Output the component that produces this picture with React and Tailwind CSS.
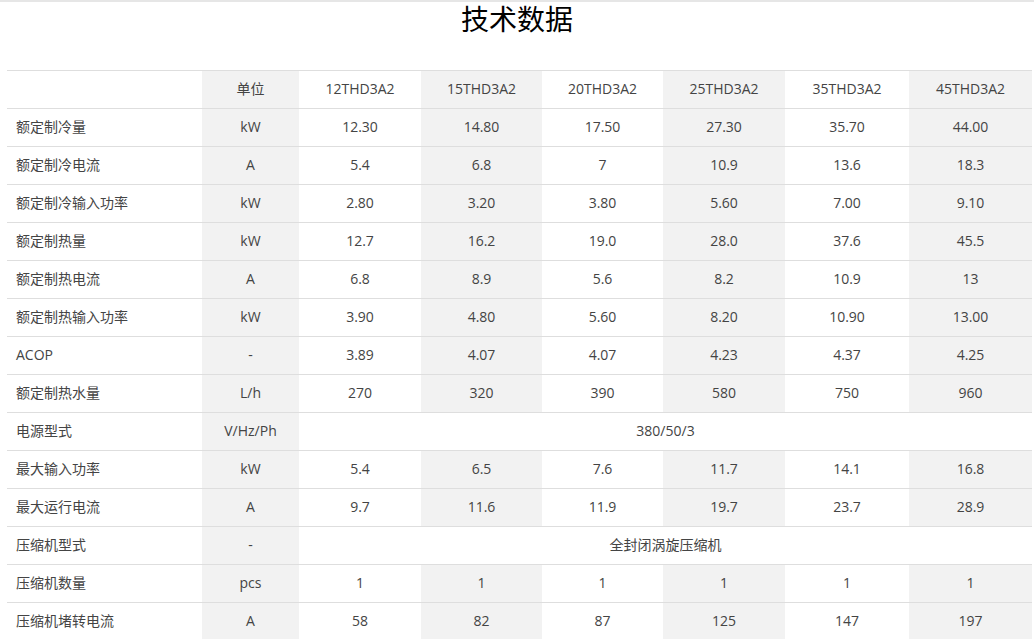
import React from 'react';

const models = ['12THD3A2', '15THD3A2', '20THD3A2', '25THD3A2', '35THD3A2', '45THD3A2'];
const widths = ['w-[122px]', 'w-[121px]', 'w-[121px]', 'w-[122px]', 'w-[124px]', 'w-[123px]'];

const rows = [
  { name: '额定制冷量', unit: 'kW', values: ['12.30', '14.80', '17.50', '27.30', '35.70', '44.00'] },
  { name: '额定制冷电流', unit: 'A', values: ['5.4', '6.8', '7', '10.9', '13.6', '18.3'] },
  { name: '额定制冷输入功率', unit: 'kW', values: ['2.80', '3.20', '3.80', '5.60', '7.00', '9.10'] },
  { name: '额定制热量', unit: 'kW', values: ['12.7', '16.2', '19.0', '28.0', '37.6', '45.5'] },
  { name: '额定制热电流', unit: 'A', values: ['6.8', '8.9', '5.6', '8.2', '10.9', '13'] },
  { name: '额定制热输入功率', unit: 'kW', values: ['3.90', '4.80', '5.60', '8.20', '10.90', '13.00'] },
  { name: 'ACOP', unit: '-', values: ['3.89', '4.07', '4.07', '4.23', '4.37', '4.25'] },
  { name: '额定制热水量', unit: 'L/h', values: ['270', '320', '390', '580', '750', '960'] },
  { name: '电源型式', unit: 'V/Hz/Ph', merged: '380/50/3' },
  { name: '最大输入功率', unit: 'kW', values: ['5.4', '6.5', '7.6', '11.7', '14.1', '16.8'] },
  { name: '最大运行电流', unit: 'A', values: ['9.7', '11.6', '11.9', '19.7', '23.7', '28.9'] },
  { name: '压缩机型式', unit: '-', merged: '全封闭涡旋压缩机' },
  { name: '压缩机数量', unit: 'pcs', values: ['1', '1', '1', '1', '1', '1'] },
  { name: '压缩机堵转电流', unit: 'A', values: ['58', '82', '87', '125', '147', '197'] },
];

const shade = (i) => (i % 2 === 0 ? 'bg-[#f2f2f2]' : 'bg-white');

const App = () => {
  return (
    <main
      className="min-h-screen bg-white border-t-2 border-[#e6e6e6] text-[#444]"
      style={{ fontFamily: '"Open Sans", "Noto Sans CJK SC", sans-serif' }}
    >
      <h1
        className="h-[68px] text-center text-[28px] leading-[32px] font-normal text-black"
        style={{ fontFamily: '"Noto Sans CJK SC", sans-serif' }}
      >
        技术数据
      </h1>

      <table className="ml-[7px] w-[1025px] table-fixed border-collapse text-[14px]">
        <colgroup>
          <col className="w-[195px]" />
          <col className="w-[97px]" />
          {models.map((m, i) => (
            <col key={m} className={widths[i]} />
          ))}
        </colgroup>
        <thead>
          <tr className="h-[38px] border-y border-[#dedede]">
            <th className="bg-white pb-[2px] font-normal"></th>
            <th className="bg-[#f2f2f2] pb-[2px] font-normal">单位</th>
            {models.map((m, i) => (
              <th key={m} className={`${shade(i + 1)} pb-[2px] font-normal`}>
                {m}
              </th>
            ))}
          </tr>
        </thead>
        <tbody>
          {rows.map((r) => (
            <tr key={r.name} className="h-[38px] border-b border-[#dedede]">
              <td className="bg-white pl-[9px] pb-[2px] text-left">{r.name}</td>
              <td className="bg-[#f2f2f2] pb-[2px] text-center">{r.unit}</td>
              {r.merged ? (
                <td colSpan={6} className="bg-white pb-[2px] text-center">
                  {r.merged}
                </td>
              ) : (
                r.values.map((v, i) => (
                  <td key={i} className={`${shade(i + 1)} pb-[2px] text-center`}>
                    {v}
                  </td>
                ))
              )}
            </tr>
          ))}
        </tbody>
      </table>
    </main>
  );
};

export default App;
